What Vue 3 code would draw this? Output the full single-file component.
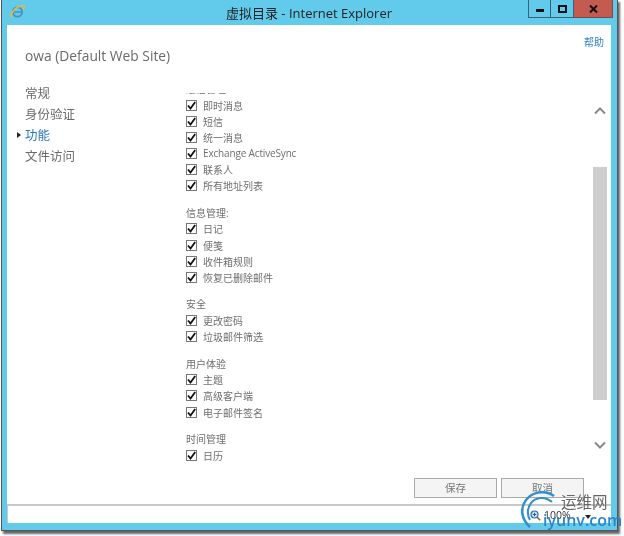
<script setup>
const nav = [
  { label: '常规' },
  { label: '身份验证' },
  { label: '功能', active: true },
  { label: '文件访问' }
]
const groups = [
  { title: '通信管理', items: ['即时消息', '短信', '统一消息', 'Exchange ActiveSync', '联系人', '所有地址列表'] },
  { title: '信息管理:', items: ['日记', '便笺', '收件箱规则', '恢复已删除邮件'] },
  { title: '安全', items: ['更改密码', '垃圾邮件筛选'] },
  { title: '用户体验', items: ['主题', '高级客户端', '电子邮件签名'] },
  { title: '时间管理', items: ['日历'] }
]
const isLatin = (s) => /^[A-Za-z ]+$/.test(s)
</script>

<template>
  <div class="page">
    <div class="window">
      <header class="titlebar">
        <svg class="ie" width="15" height="15" viewBox="0 0 15 15">
          <circle cx="7.500" cy="8" r="4.600" fill="none" stroke="#4a8fc8" stroke-width="1.900"/>
          <path d="M3.500 8h8" stroke="#4a8fc8" stroke-width="1.500"/>
          <path d="M1.300 13.500C-.5 11.500 3.800 5 8 3c2.400-1.200 5-2.200 6-1.200.7.800-.1 2.400-1.200 3.700" fill="none" stroke="#eebb2e" stroke-width="1.500"/>
        </svg>
        <span class="title">虚拟目录 - Internet Explorer</span>
        <div class="controls">
          <button class="ctl"><span class="min"></span></button>
          <button class="ctl"><span class="max"></span></button>
          <button class="ctl close">
            <svg width="9" height="8" viewBox="0 0 9 8"><path d="M1 .5l7 7M8 .5l-7 7" stroke="#111" stroke-width="2" fill="none"/></svg>
          </button>
        </div>
      </header>

      <main class="content">
        <div class="help-row"><a class="help">帮助</a></div>
        <h1 class="heading">owa (Default Web Site)</h1>

        <div class="body">
          <nav class="nav">
            <div v-for="n in nav" :key="n.label" class="nav-item" :class="{ active: n.active }">{{ n.label }}</div>
          </nav>

          <section class="panel">
            <div class="list">
              <div v-for="g in groups" :key="g.title" class="group">
                <div class="group-title">{{ g.title }}</div>
                <label v-for="it in g.items" :key="it" class="row" :class="{ latin: isLatin(it) }">
                  <span class="box">
                    <svg width="11" height="11" viewBox="0 0 11 11"><path d="M2 5.500l2.500 3L9.200 2" stroke="#111" stroke-width="1.800" fill="none"/></svg>
                  </span>
                  <span>{{ it }}</span>
                </label>
              </div>
            </div>
          </section>

          <aside class="scrollbar">
            <svg class="chev up" width="12" height="8" viewBox="0 0 12 8"><path d="M1 6.500l5-5 5 5" stroke="#8a8a8a" stroke-width="2" fill="none"/></svg>
            <div class="thumb"></div>
            <svg class="chev down" width="12" height="8" viewBox="0 0 12 8"><path d="M1 1.500l5 5 5-5" stroke="#8a8a8a" stroke-width="2" fill="none"/></svg>
          </aside>
        </div>

        <footer class="actions">
          <button class="btn">保存</button>
          <button class="btn">取消</button>
        </footer>

        <div class="status"></div>
      </main>
    </div>

    <div class="watermark">
      <svg class="wm-arc" width="44" height="46" viewBox="0 0 44 46">
        <path d="M33 5C25-1 12 0 5 9c-6 8-5 19 4 27" stroke="#2f8fd0" stroke-width="2.500" fill="none"/>
        <path d="M31 11C24 5 15 6 10 12c-4 5-4 12-1 17" stroke="#2f8fd0" stroke-width="2" fill="none"/>
      </svg>
      <svg class="wm-zoom" width="11" height="11" viewBox="0 0 11 11">
        <circle cx="4.500" cy="4.500" r="3.500" fill="#cfe3f5" stroke="#2a6fb0" stroke-width="1.200"/>
        <path d="M7 7l3.200 3.200" stroke="#8a6a30" stroke-width="1.600"/>
        <path d="M2.800 4.500h3.400M4.500 2.800v3.400" stroke="#1c5f9f"/>
      </svg>
      <span class="wm-pct">100%</span>
      <span class="wm-caret"></span>
      <span class="wm-cn">运维网</span>
      <span class="wm-url">iyunv.com</span>
    </div>
  </div>
</template>

<style scoped>
.page {
  position: relative;
  width: 624px;
  height: 536px;
  overflow: hidden;
  background: #fff;
  font-family: "Open Sans", "Noto Sans CJK SC", sans-serif;
  filter: blur(0.45px);
}
.window {
  box-sizing: border-box;
  width: 615px;
  height: 530px;
  margin-left: 2px;
  padding: 0 6px 7px 5px;
  background: #62cbec;
  box-shadow: 0 0 0 1px #555, 2px 3px 2px 1px #666;
  display: flex;
  flex-direction: column;
}
.titlebar {
  position: relative;
  flex: 0 0 25px;
  display: flex;
  align-items: center;
  justify-content: center;
}
.ie {
  position: absolute;
  left: 3px;
  top: 4px;
}
.title {
  font-size: 13px;
  color: #222;
}
.controls {
  position: absolute;
  right: -2px;
  top: 0;
  display: flex;
}
.ctl {
  box-sizing: border-box;
  width: 23px;
  height: 18px;
  margin: 0;
  padding: 0;
  background: #62cbec;
  border: 1px solid #3e6070;
  border-top: 0;
  display: flex;
  align-items: center;
  justify-content: center;
}
.ctl + .ctl {
  border-left: 0;
}
.close {
  width: 39px;
  background: #c45b50;
  border-color: #7c4a48;
}
.min {
  display: block;
  width: 8px;
  height: 3px;
  margin-top: 4px;
  background: #111;
}
.max {
  box-sizing: border-box;
  display: block;
  width: 9px;
  height: 8px;
  border: 2px solid #111;
}
.content {
  flex: 1;
  min-height: 0;
  background: #fff;
  display: flex;
  flex-direction: column;
}
.help-row {
  display: flex;
  justify-content: flex-end;
  padding: 10px 7px 0 0;
  height: 15px;
}
.help {
  font-size: 10px;
  line-height: 15px;
  color: #2f80c8;
}
.heading {
  margin: -5px 0 0 18px;
  font-size: 13.800px;
  line-height: 22px;
  font-weight: 400;
  color: #6a6a6a;
}
.body {
  height: 389px;
  margin-top: 15px;
  display: flex;
}
.nav {
  flex: 0 0 166px;
  padding: 1px 0 0 18px;
  box-sizing: border-box;
}
.nav-item {
  position: relative;
  font-size: 12.500px;
  line-height: 21px;
  color: #6a6a6a;
}
.nav-item.active {
  color: #2878b8;
}
.nav-item.active::before {
  content: "";
  position: absolute;
  left: -8px;
  top: 7px;
  border-left: 4px solid #222;
  border-top: 3.500px solid transparent;
  border-bottom: 3.500px solid transparent;
}
.panel {
  flex: 1;
  min-width: 0;
  overflow: hidden;
  margin-top: 11px;
}
.list {
  margin-top: -11px;
  padding-left: 13px;
}
.group + .group {
  margin-top: 12px;
}
.group-title {
  font-size: 10px;
  line-height: 15px;
  color: #6e6e6e;
}
.row {
  display: flex;
  align-items: center;
  gap: 6px;
  height: 16.150px;
  font-size: 10px;
  color: #6e6e6e;
}
.row.latin {
  letter-spacing: -0.16px;
}
.box {
  box-sizing: border-box;
  width: 11px;
  height: 11px;
  flex: 0 0 11px;
  border: 1px solid #777;
  display: flex;
  align-items: center;
  justify-content: center;
  background: #fff;
}
.box svg {
  flex: none;
}
.scrollbar {
  flex: 0 0 14px;
  margin: 11px 4px 0;
  display: flex;
  flex-direction: column;
  align-items: center;
}
.chev.up {
  margin-top: 14px;
}
.thumb {
  flex: none;
  width: 14px;
  height: 233px;
  margin-top: 52px;
  background: #cdcdcd;
}
.chev.down {
  margin-top: 41px;
}
.actions {
  display: flex;
  justify-content: flex-end;
  gap: 4px;
  padding-right: 27px;
  margin-top: 7px;
}
.btn {
  box-sizing: border-box;
  width: 83px;
  height: 20px;
  padding: 0;
  background: #f4f4f4;
  border: 1px solid #aaa;
  color: #777;
  font-family: inherit;
  font-size: 10.500px;
  line-height: 18px;
}
.status {
  margin-top: auto;
  height: 17px;
  border-top: 2px solid #c8c8c8;
  border-left: 1px solid #c8c8c8;
}
.watermark {
  position: absolute;
  left: 0;
  top: 0;
}
.wm-arc {
  position: absolute;
  left: 521px;
  top: 491px;
}
.wm-zoom {
  position: absolute;
  left: 530px;
  top: 510px;
}
.wm-pct {
  position: absolute;
  left: 544px;
  top: 508px;
  font-size: 10.500px;
  line-height: 14px;
  color: #333;
}
.wm-caret {
  position: absolute;
  left: 585px;
  top: 515px;
  border-top: 4px solid #222;
  border-left: 3px solid transparent;
  border-right: 3px solid transparent;
}
.wm-cn {
  position: absolute;
  left: 561px;
  top: 492px;
  font-size: 15.500px;
  line-height: 20px;
  color: #666;
  white-space: nowrap;
}
.wm-url {
  position: absolute;
  left: 543px;
  top: 510px;
  font-size: 16px;
  line-height: 20px;
  font-weight: 600;
  color: #2a86c8;
  white-space: nowrap;
}
</style>
